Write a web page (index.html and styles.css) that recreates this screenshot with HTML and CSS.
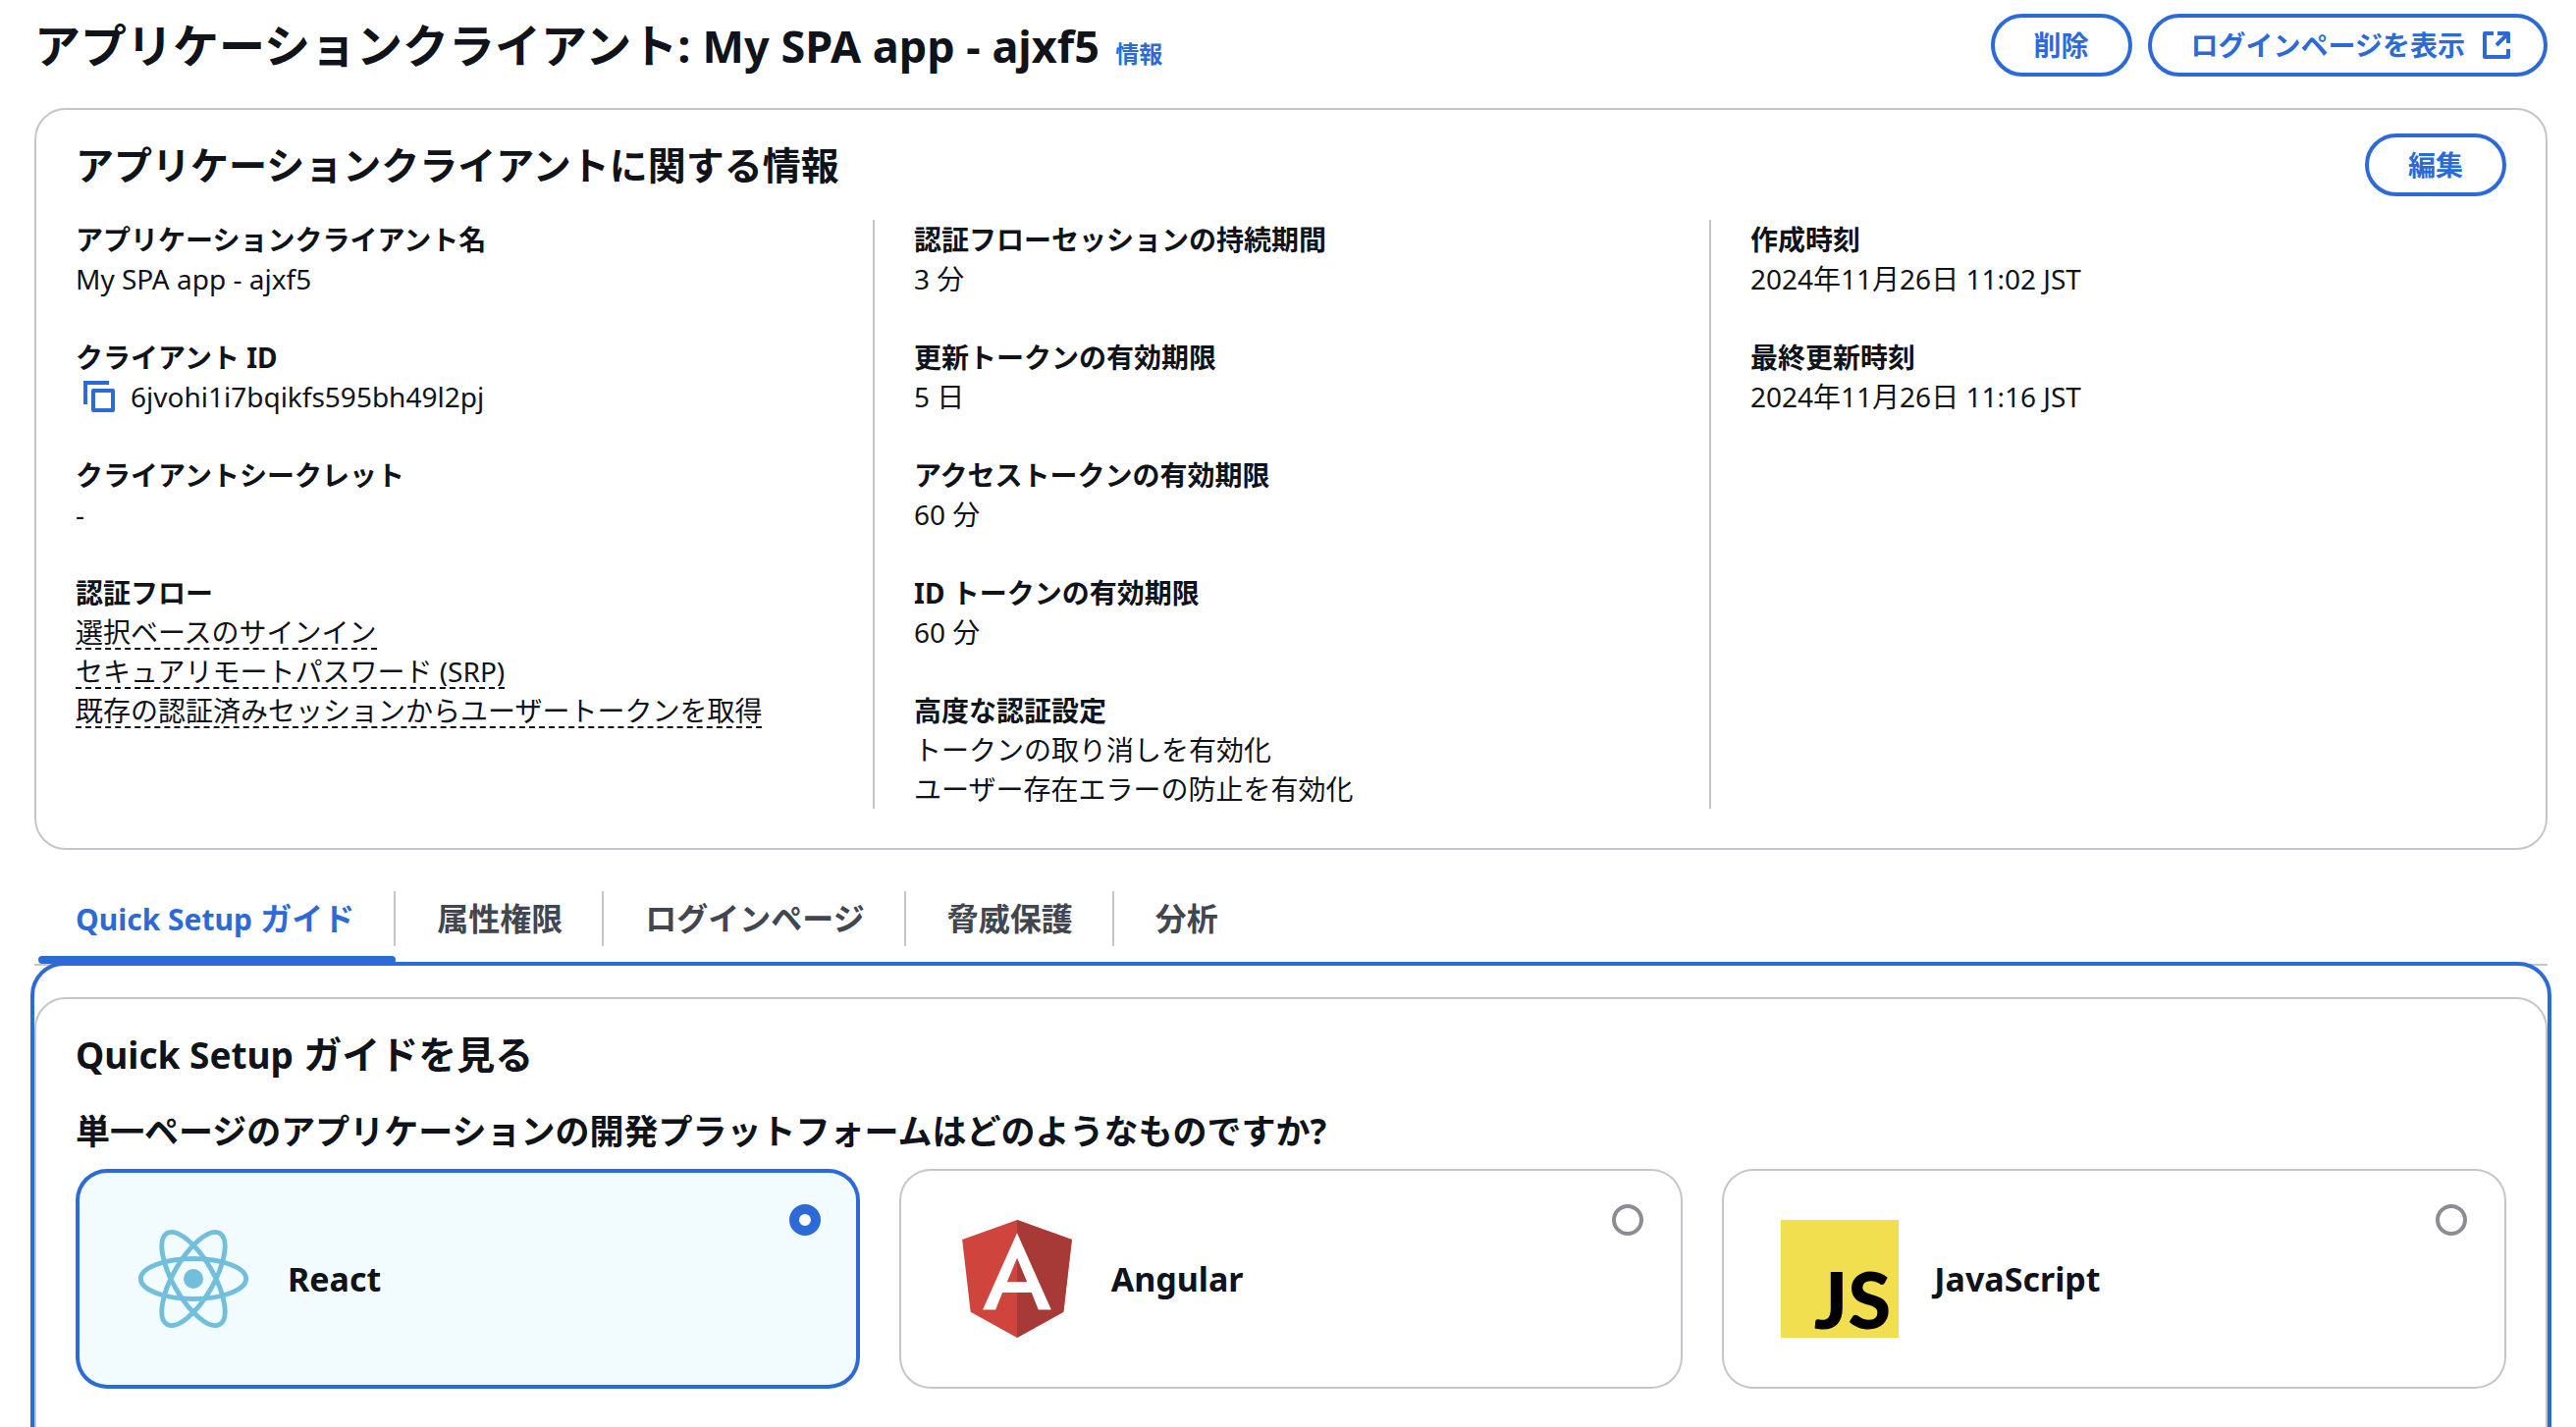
FILE: index.html
```html
<!DOCTYPE html>
<html lang="ja">
<head>
<meta charset="utf-8">
<meta name="viewport" content="width=device-width, initial-scale=1">
<title>アプリケーションクライアント</title>
<link rel="stylesheet" href="styles.css">
</head>
<body>
<main class="page">
  <header class="page-header">
    <h1 class="page-title">アプリケーションクライアント: <span class="latin">My SPA app - ajxf5</span> <a class="info-link" href="#info">情報</a></h1>
    <div class="actions">
      <button class="button" type="button">削除</button>
      <button class="button button-external" type="button">ログインページを表示
        <svg class="icon" viewBox="0 0 32 32" aria-hidden="true"><path d="M13 4H4v24h24v-8M17 4h11v10M28 4 16 16" fill="none" stroke="currentColor" stroke-width="4" stroke-linejoin="round"/></svg>
      </button>
    </div>
  </header>

  <section class="card">
    <div class="card-header">
      <h2 class="card-title">アプリケーションクライアントに関する情報</h2>
      <button class="button" type="button">編集</button>
    </div>
    <div class="columns">
      <dl class="column">
        <div><dt>アプリケーションクライアント名</dt><dd>My SPA app - ajxf5</dd></div>
        <div><dt>クライアント ID</dt>
          <dd class="copyable"><button class="copy-button" type="button" aria-label="コピー"><svg class="icon" viewBox="0 0 32 32" aria-hidden="true"><path d="M2 24V2h24" fill="none" stroke="currentColor" stroke-width="4"/><rect x="10" y="10" width="20" height="20" fill="none" stroke="currentColor" stroke-width="4" stroke-linejoin="round"/></svg></button>6jvohi1i7bqikfs595bh49l2pj</dd></div>
        <div><dt>クライアントシークレット</dt><dd>-</dd></div>
        <div><dt>認証フロー</dt>
          <dd><button class="term" type="button">選択ベースのサインイン</button></dd>
          <dd><button class="term" type="button">セキュアリモートパスワード (SRP)</button></dd>
          <dd><button class="term" type="button">既存の認証済みセッションからユーザートークンを取得</button></dd></div>
      </dl>
      <dl class="column">
        <div><dt>認証フローセッションの持続期間</dt><dd>3 分</dd></div>
        <div><dt>更新トークンの有効期限</dt><dd>5 日</dd></div>
        <div><dt>アクセストークンの有効期限</dt><dd>60 分</dd></div>
        <div><dt>ID トークンの有効期限</dt><dd>60 分</dd></div>
        <div><dt>高度な認証設定</dt><dd>トークンの取り消しを有効化</dd><dd>ユーザー存在エラーの防止を有効化</dd></div>
      </dl>
      <dl class="column">
        <div><dt>作成時刻</dt><dd>2024年11月26日 11:02 JST</dd></div>
        <div><dt>最終更新時刻</dt><dd>2024年11月26日 11:16 JST</dd></div>
      </dl>
    </div>
  </section>

  <div class="tabs" role="tablist">
    <button class="tab tab-active" type="button" role="tab" aria-selected="true"><span class="latin">Quick Setup</span> ガイド</button>
    <button class="tab" type="button" role="tab">属性権限</button>
    <button class="tab" type="button" role="tab">ログインページ</button>
    <button class="tab" type="button" role="tab">脅威保護</button>
    <button class="tab" type="button" role="tab">分析</button>
  </div>

  <div class="panel" role="tabpanel">
    <section class="card guide">
      <h2 class="card-title"><span class="latin">Quick Setup</span> ガイドを見る</h2>
      <fieldset class="platforms">
        <legend class="question">単一ページのアプリケーションの開発プラットフォームはどのようなものですか?</legend>
        <div class="tiles">
          <label class="tile">
            <svg class="logo" viewBox="-12.3 -12.3 24.6 24.6" aria-hidden="true"><circle r="2.05" fill="#71bfdc"/><g fill="none" stroke="#71bfdc"><ellipse rx="11" ry="4.2"/><ellipse rx="11" ry="4.2" transform="rotate(60)"/><ellipse rx="11" ry="4.2" transform="rotate(120)"/></g></svg>
            <span class="tile-name">React</span>
            <input class="radio" type="radio" name="platform" checked>
          </label>
          <label class="tile">
            <svg class="logo" viewBox="25 30 200 200" aria-hidden="true"><path fill="#d0443e" d="M125 30 31.9 63.2l14.2 123.1L125 230l78.9-43.7 14.2-123.1z"/><path fill="#a73a37" d="M125 30v200l78.9-43.7 14.2-123.1z"/><path fill="#fff" d="M125 52.1 66.8 182.6h21.7l11.7-29.2h49.4l11.7 29.2H183zm17 83.3h-34l17-40.9z"/></svg>
            <span class="tile-name">Angular</span>
            <input class="radio" type="radio" name="platform">
          </label>
          <label class="tile">
            <span class="logo logo-js" aria-hidden="true">JS</span>
            <span class="tile-name">JavaScript</span>
            <input class="radio" type="radio" name="platform">
          </label>
        </div>
      </fieldset>
    </section>
  </div>
</main>
</body>
</html>
```
FILE: styles.css
```css
:root {
  --blue: #2c6ad8;
  --text: #101319;
  --line: #c5c5cb;
  --muted: #424650;
}

*, *::before, *::after { box-sizing: border-box; }

body {
  margin: 0;
  height: 100vh;
  overflow: hidden;
  background: #fff;
  color: var(--text);
  font: 400 28px/40px "Noto Sans", "Noto Sans CJK JP", sans-serif;
}

h1, h2, dl, dd, fieldset { margin: 0; padding: 0; }

button {
  font: inherit;
  color: inherit;
  background: none;
  border: 0;
  padding: 0;
  cursor: pointer;
}

.page { padding: 14px 29px 0 35px; }

.page-header {
  display: flex;
  justify-content: space-between;
  align-items: flex-start;
  margin-bottom: 32px;
}

.page-title { padding-top: 10px; font-size: 47px; line-height: 44px; font-weight: 700; }
.page-title .latin { font-size: 45px; }

.info-link {
  margin-left: 4px;
  color: var(--blue);
  font-size: 24px;
  text-decoration: none;
}

.actions { display: flex; gap: 16px; }

.button {
  display: flex;
  align-items: center;
  height: 64px;
  padding: 0 40px;
  border: 4px solid var(--blue);
  border-radius: 32px;
  color: var(--blue);
  font-weight: 600;
  white-space: nowrap;
}

.button-external { gap: 16px; padding-right: 32px; }

.icon { display: block; width: 32px; height: 32px; }

.card {
  border: 2px solid var(--line);
  border-radius: 32px;
  background: #fff;
}

.card-header {
  display: flex;
  justify-content: space-between;
  align-items: center;
  padding: 24px 40px;
}

.card-title { font-size: 39px; line-height: 48px; font-weight: 700; }
.card-title .latin { font-size: 37px; }

.columns {
  display: grid;
  grid-template-columns: repeat(3, 1fr);
  padding-bottom: 40px;
}

.column {
  display: flex;
  flex-direction: column;
  gap: 40px;
  padding: 0 40px;
}

.column + .column { border-left: 2px solid var(--line); }

dt { font-weight: 700; }

.copyable { display: flex; align-items: center; gap: 16px; padding-left: 8px; }
.copy-button { color: var(--blue); }

.term {
  display: block;
  margin-bottom: 2px;
  padding-top: 4px;
  line-height: 32px;
  border-bottom: 2px dashed var(--text);
}

.tabs {
  display: flex;
  margin-top: 24px;
  border-bottom: 2px solid var(--line);
}

.tab {
  position: relative;
  height: 92px;
  padding: 0 42px;
  color: var(--muted);
  font-size: 32px;
  font-weight: 700;
}

.tab .latin { font-size: 30px; }

.tab:not(:last-child)::before {
  content: "";
  position: absolute;
  right: 0;
  top: 18px;
  width: 2px;
  height: 56px;
  background: var(--line);
}

.tab-active { color: var(--blue); }

.tab-active::after {
  content: "";
  position: absolute;
  left: 4px;
  right: 0;
  bottom: 0;
  height: 8px;
  border-radius: 4px;
  background: var(--blue);
}

.panel {
  padding-top: 32px;
  border-radius: 30px;
  outline: 4px solid var(--blue);
}

.guide { padding: 32px 40px 80px; }

.platforms { border: 0; margin-top: 32px; min-width: 0; }

.question {
  padding: 0;
  margin-bottom: 16px;
  font-size: 35px;
  line-height: 44px;
  font-weight: 700;
}

.tiles { display: grid; grid-template-columns: repeat(3, 1fr); gap: 40px; }

.tile {
  display: flex;
  align-items: center;
  padding: 36px 40px 36px 60px;
  border-radius: 32px;
  box-shadow: inset 0 0 0 2px var(--line);
  cursor: pointer;
}

.tile:has(:checked) {
  background: #f2fbfe;
  box-shadow: inset 0 0 0 4px var(--blue);
}

.logo { width: 120px; height: 120px; margin: 16px 36px 16px 0; }

.logo-js {
  padding: 40px 8px 0 0;
  background: #f1df50;
  color: #000;
  font: 900 80px/80px Lato, sans-serif;
  text-align: right;
}

.tile-name { font-size: 34px; font-weight: 700; }

.radio {
  appearance: none;
  align-self: flex-start;
  width: 32px;
  height: 32px;
  margin: 0 0 0 auto;
  border: 4px solid #8c8c94;
  border-radius: 50%;
  background: #fff;
}

.radio:checked { border: 10px solid var(--blue); }
```
